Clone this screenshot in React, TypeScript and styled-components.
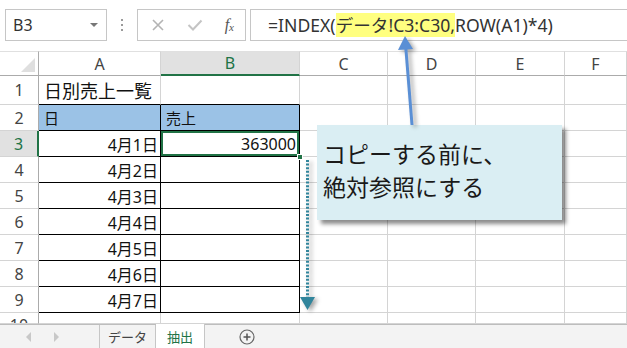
import React from "react";
import styled, { createGlobalStyle } from "styled-components";

const GlobalStyle = createGlobalStyle`
  html, body { margin: 0; padding: 0; background: #fff; }
  body { font-family: "Noto Sans", "Noto Sans CJK JP", sans-serif; color: #222; }
  * { box-sizing: border-box; }
`;

const cols = ["A", "B", "C", "D", "E", "F"];
const days = ["4月1日", "4月2日", "4月3日", "4月4日", "4月5日", "4月6日", "4月7日"];

const App = () => {
  return (
    <Page>
      <GlobalStyle />
      <FormulaBar>
        <NameBox>
          <span>B3</span>
          <DropTri />
        </NameBox>
        <Grip>
          <Dot />
          <Dot />
          <Dot />
        </Grip>
        <ButtonBox>
          <svg width="14" height="14" viewBox="0 0 14 14">
            <path d="M2 2 L12 12 M12 2 L2 12" stroke="#b4b4b4" strokeWidth="1.6" fill="none" />
          </svg>
          <svg width="16" height="14" viewBox="0 0 16 14">
            <path d="M1.5 7 L6 11.5 L14.5 2.5" stroke="#c4c4c4" strokeWidth="2" fill="none" />
          </svg>
          <Fx>
            f<sub>x</sub>
          </Fx>
        </ButtonBox>
        <FormulaBox>
          =INDEX(<Mark>データ!C3:C30,</Mark>ROW(A1)*4)
        </FormulaBox>
      </FormulaBar>

      <Sheet>
        <Corner />
        {cols.map((c) => (
          <ColHead key={c} $selected={c === "B"}>
            {c}
          </ColHead>
        ))}

        <RowHead>1</RowHead>
        <Cell $size={18} $bottom>
          日別売上一覧
        </Cell>
        <Cell $bottom />
        <Cell />
        <Cell />
        <Cell />
        <Cell />

        <RowHead>2</RowHead>
        <Cell $fill="#9bc2e6" $boxed $size={15}>
          日
        </Cell>
        <Cell $fill="#9bc2e6" $boxed $size={15}>
          売上
        </Cell>
        <Cell />
        <Cell />
        <Cell />
        <Cell />

        {days.map((d, i) => (
          <React.Fragment key={d}>
            <RowHead $selected={i === 0}>{i + 3}</RowHead>
            <Cell $boxed $right>
              {d}
            </Cell>
            {i === 0 ? (
              <ActiveCell $boxed $right>
                363000
                <FillHandle />
              </ActiveCell>
            ) : (
              <Cell $boxed />
            )}
            <Cell />
            <Cell />
            <Cell />
            <Cell />
          </React.Fragment>
        ))}

        <RowHead $clipped>10</RowHead>
        <Cell />
        <Cell />
        <Cell />
        <Cell />
        <Cell />
        <Cell />
      </Sheet>

      <TabBar>
        <NavArrows>
          <NavTri $dir="left" />
          <NavTri $dir="right" />
        </NavArrows>
        <Tab $w={56}>データ</Tab>
        <Tab $w={49} $active>
          抽出
        </Tab>
        <AddSheet>
          <svg width="16" height="16" viewBox="0 0 16 16">
            <circle cx="8" cy="8" r="7" stroke="#666" strokeWidth="1.2" fill="none" />
            <path d="M8 4.5 V11.5 M4.5 8 H11.5" stroke="#555" strokeWidth="1.5" />
          </svg>
        </AddSheet>
      </TabBar>

      <Callout>
        コピーする前に、
        <br />
        絶対参照にする
      </Callout>

      <UpArrow width="30" height="100" viewBox="0 0 30 100">
        <path d="M10.5 14 L17 95" stroke="#5a8fd5" strokeWidth="3" fill="none" />
        <polygon points="10,6 3,20 18,19" fill="#5a8fd5" />
      </UpArrow>

      <DownArrow width="24" height="160" viewBox="0 0 24 160">
        <path d="M7.5 0 L7.5 138" stroke="#31859c" strokeWidth="3" strokeDasharray="2 1.6" fill="none" />
        <polygon points="0,137 15,137 7.5,150" fill="#31859c" />
      </DownArrow>
    </Page>
  );
};

export default App;

const Page = styled.div`
  position: relative;
  width: 627px;
  height: 348px;
  overflow: hidden;
  display: flex;
  flex-direction: column;
  background: #fff;
`;

const FormulaBar = styled.div`
  height: 51px;
  display: flex;
  align-items: flex-start;
  padding: 9px 0 0 5px;
`;

const NameBox = styled.div`
  width: 102px;
  height: 32px;
  border: 1px solid #c6c6c6;
  display: flex;
  align-items: center;
  justify-content: space-between;
  padding: 0 8px 0 7px;
  font-size: 16px;
  color: #333;
`;

const DropTri = styled.div`
  width: 0;
  height: 0;
  border-left: 4px solid transparent;
  border-right: 4px solid transparent;
  border-top: 4px solid #777;
`;

const Grip = styled.div`
  width: 30px;
  height: 32px;
  display: flex;
  flex-direction: column;
  align-items: center;
  justify-content: center;
  gap: 3px;
`;

const Dot = styled.div`
  width: 2px;
  height: 2px;
  background: #9a9a9a;
`;

const ButtonBox = styled.div`
  width: 109px;
  height: 32px;
  border: 1px solid #c6c6c6;
  display: flex;
  align-items: center;
  justify-content: space-between;
  padding: 0 11px 0 13px;
`;

const Fx = styled.span`
  font-family: "Liberation Serif", serif;
  font-style: italic;
  font-size: 16px;
  color: #555;
  sub {
    font-size: 11px;
    vertical-align: -1px;
  }
`;

const FormulaBox = styled.div`
  flex: 1;
  height: 32px;
  margin: 0 -10px 0 4px;
  border: 1px solid #c6c6c6;
  display: flex;
  align-items: center;
  padding-left: 17px;
  font-size: 17.6px;
  color: #333;
  white-space: nowrap;
`;

const Mark = styled.span`
  background: #ffff80;
  line-height: 24px;
`;

const Sheet = styled.div`
  display: grid;
  grid-template-columns: 39px 122px 139px 88px 88px 89px 62px;
  grid-template-rows: 25px 29px repeat(8, 26px) 11px;
  overflow: hidden;
`;

const Corner = styled.div`
  position: relative;
  border-top: 1px solid #e0e0e0;
  border-right: 1px solid #ababab;
  border-bottom: 1px solid #ababab;
  &::after {
    content: "";
    position: absolute;
    right: 3px;
    bottom: 3px;
    border-left: 14px solid transparent;
    border-bottom: 14px solid #dfdfdf;
  }
`;

const ColHead = styled.div<{ $selected?: boolean }>`
  display: flex;
  align-items: center;
  justify-content: center;
  font-size: 16px;
  color: ${(p) => (p.$selected ? "#217346" : "#444")};
  background: ${(p) => (p.$selected ? "#e1e1e1" : "#fff")};
  border-top: 1px solid #e0e0e0;
  border-right: 1px solid #d4d4d4;
  border-bottom: ${(p) => (p.$selected ? "2px solid #217346" : "1px solid #ababab")};
`;

const RowHead = styled.div<{ $selected?: boolean; $clipped?: boolean }>`
  display: flex;
  align-items: ${(p) => (p.$clipped ? "flex-start" : "center")};
  justify-content: center;
  font-size: 16px;
  line-height: ${(p) => (p.$clipped ? "11px" : "26px")};
  padding-top: ${(p) => (p.$clipped ? "7px" : "0")};
  overflow: hidden;
  color: ${(p) => (p.$selected ? "#217346" : "#444")};
  background: ${(p) => (p.$selected ? "#e1e1e1" : "#fff")};
  border-right: ${(p) => (p.$selected ? "2px solid #217346" : "1px solid #ababab")};
  border-bottom: 1px solid #d4d4d4;
`;

const Cell = styled.div<{
  $fill?: string;
  $boxed?: boolean;
  $bottom?: boolean;
  $right?: boolean;
  $size?: number;
}>`
  display: flex;
  align-items: center;
  justify-content: ${(p) => (p.$right ? "flex-end" : "flex-start")};
  padding: 0 2px 0 5px;
  font-size: ${(p) => p.$size || 16}px;
  color: #111;
  white-space: nowrap;
  overflow: hidden;
  background: ${(p) => p.$fill || "#fff"};
  border-right: 1px solid ${(p) => (p.$boxed ? "#000" : "#d4d4d4")};
  border-bottom: 1px solid ${(p) => (p.$boxed || p.$bottom ? "#000" : "#d4d4d4")};
`;

const ActiveCell = styled(Cell)`
  position: relative;
  overflow: visible;
  padding-right: 3px;
  box-shadow: inset 0 0 0 2px #217346;
`;

const FillHandle = styled.div`
  position: absolute;
  right: -4px;
  bottom: -4px;
  width: 6px;
  height: 6px;
  background: #217346;
  border: 1px solid #fff;
`;

const TabBar = styled.div`
  height: 24px;
  display: flex;
  align-items: stretch;
  background: #f3f3f3;
  border-top: 1px solid #bdbdbd;
`;

const NavArrows = styled.div`
  width: 100px;
  display: flex;
  align-items: center;
  padding-left: 26px;
  gap: 23px;
  border-right: 1px solid #c6c6c6;
`;

const NavTri = styled.div<{ $dir: "left" | "right" }>`
  width: 0;
  height: 0;
  border-top: 5px solid transparent;
  border-bottom: 5px solid transparent;
  ${(p) => (p.$dir === "left" ? "border-right: 5px solid #c8c8c8;" : "border-left: 5px solid #c8c8c8;")}
`;

const Tab = styled.div<{ $active?: boolean; $w: number }>`
  width: ${(p) => p.$w}px;
  display: flex;
  align-items: center;
  justify-content: center;
  margin-top: ${(p) => (p.$active ? "-1px" : "0")};
  font-size: 13px;
  color: ${(p) => (p.$active ? "#217346" : "#444")};
  background: ${(p) => (p.$active ? "#fff" : "transparent")};
  border-right: 1px solid #c6c6c6;
`;

const AddSheet = styled.div`
  display: flex;
  align-items: center;
  padding-left: 34px;
`;

const Callout = styled.div`
  position: absolute;
  left: 317px;
  top: 125px;
  width: 245px;
  height: 95px;
  padding: 13px 0 0 6px;
  background: #daeef3;
  box-shadow: 4px 4px 4px rgba(0, 0, 0, 0.45);
  font-size: 23px;
  line-height: 33px;
  color: #1a1a1a;
`;

const UpArrow = styled.svg`
  position: absolute;
  left: 395px;
  top: 30px;
  filter: drop-shadow(3px 2px 2px rgba(0, 0, 0, 0.35));
`;

const DownArrow = styled.svg`
  position: absolute;
  left: 300px;
  top: 160px;
  filter: drop-shadow(3px 2px 2px rgba(0, 0, 0, 0.35));
`;
